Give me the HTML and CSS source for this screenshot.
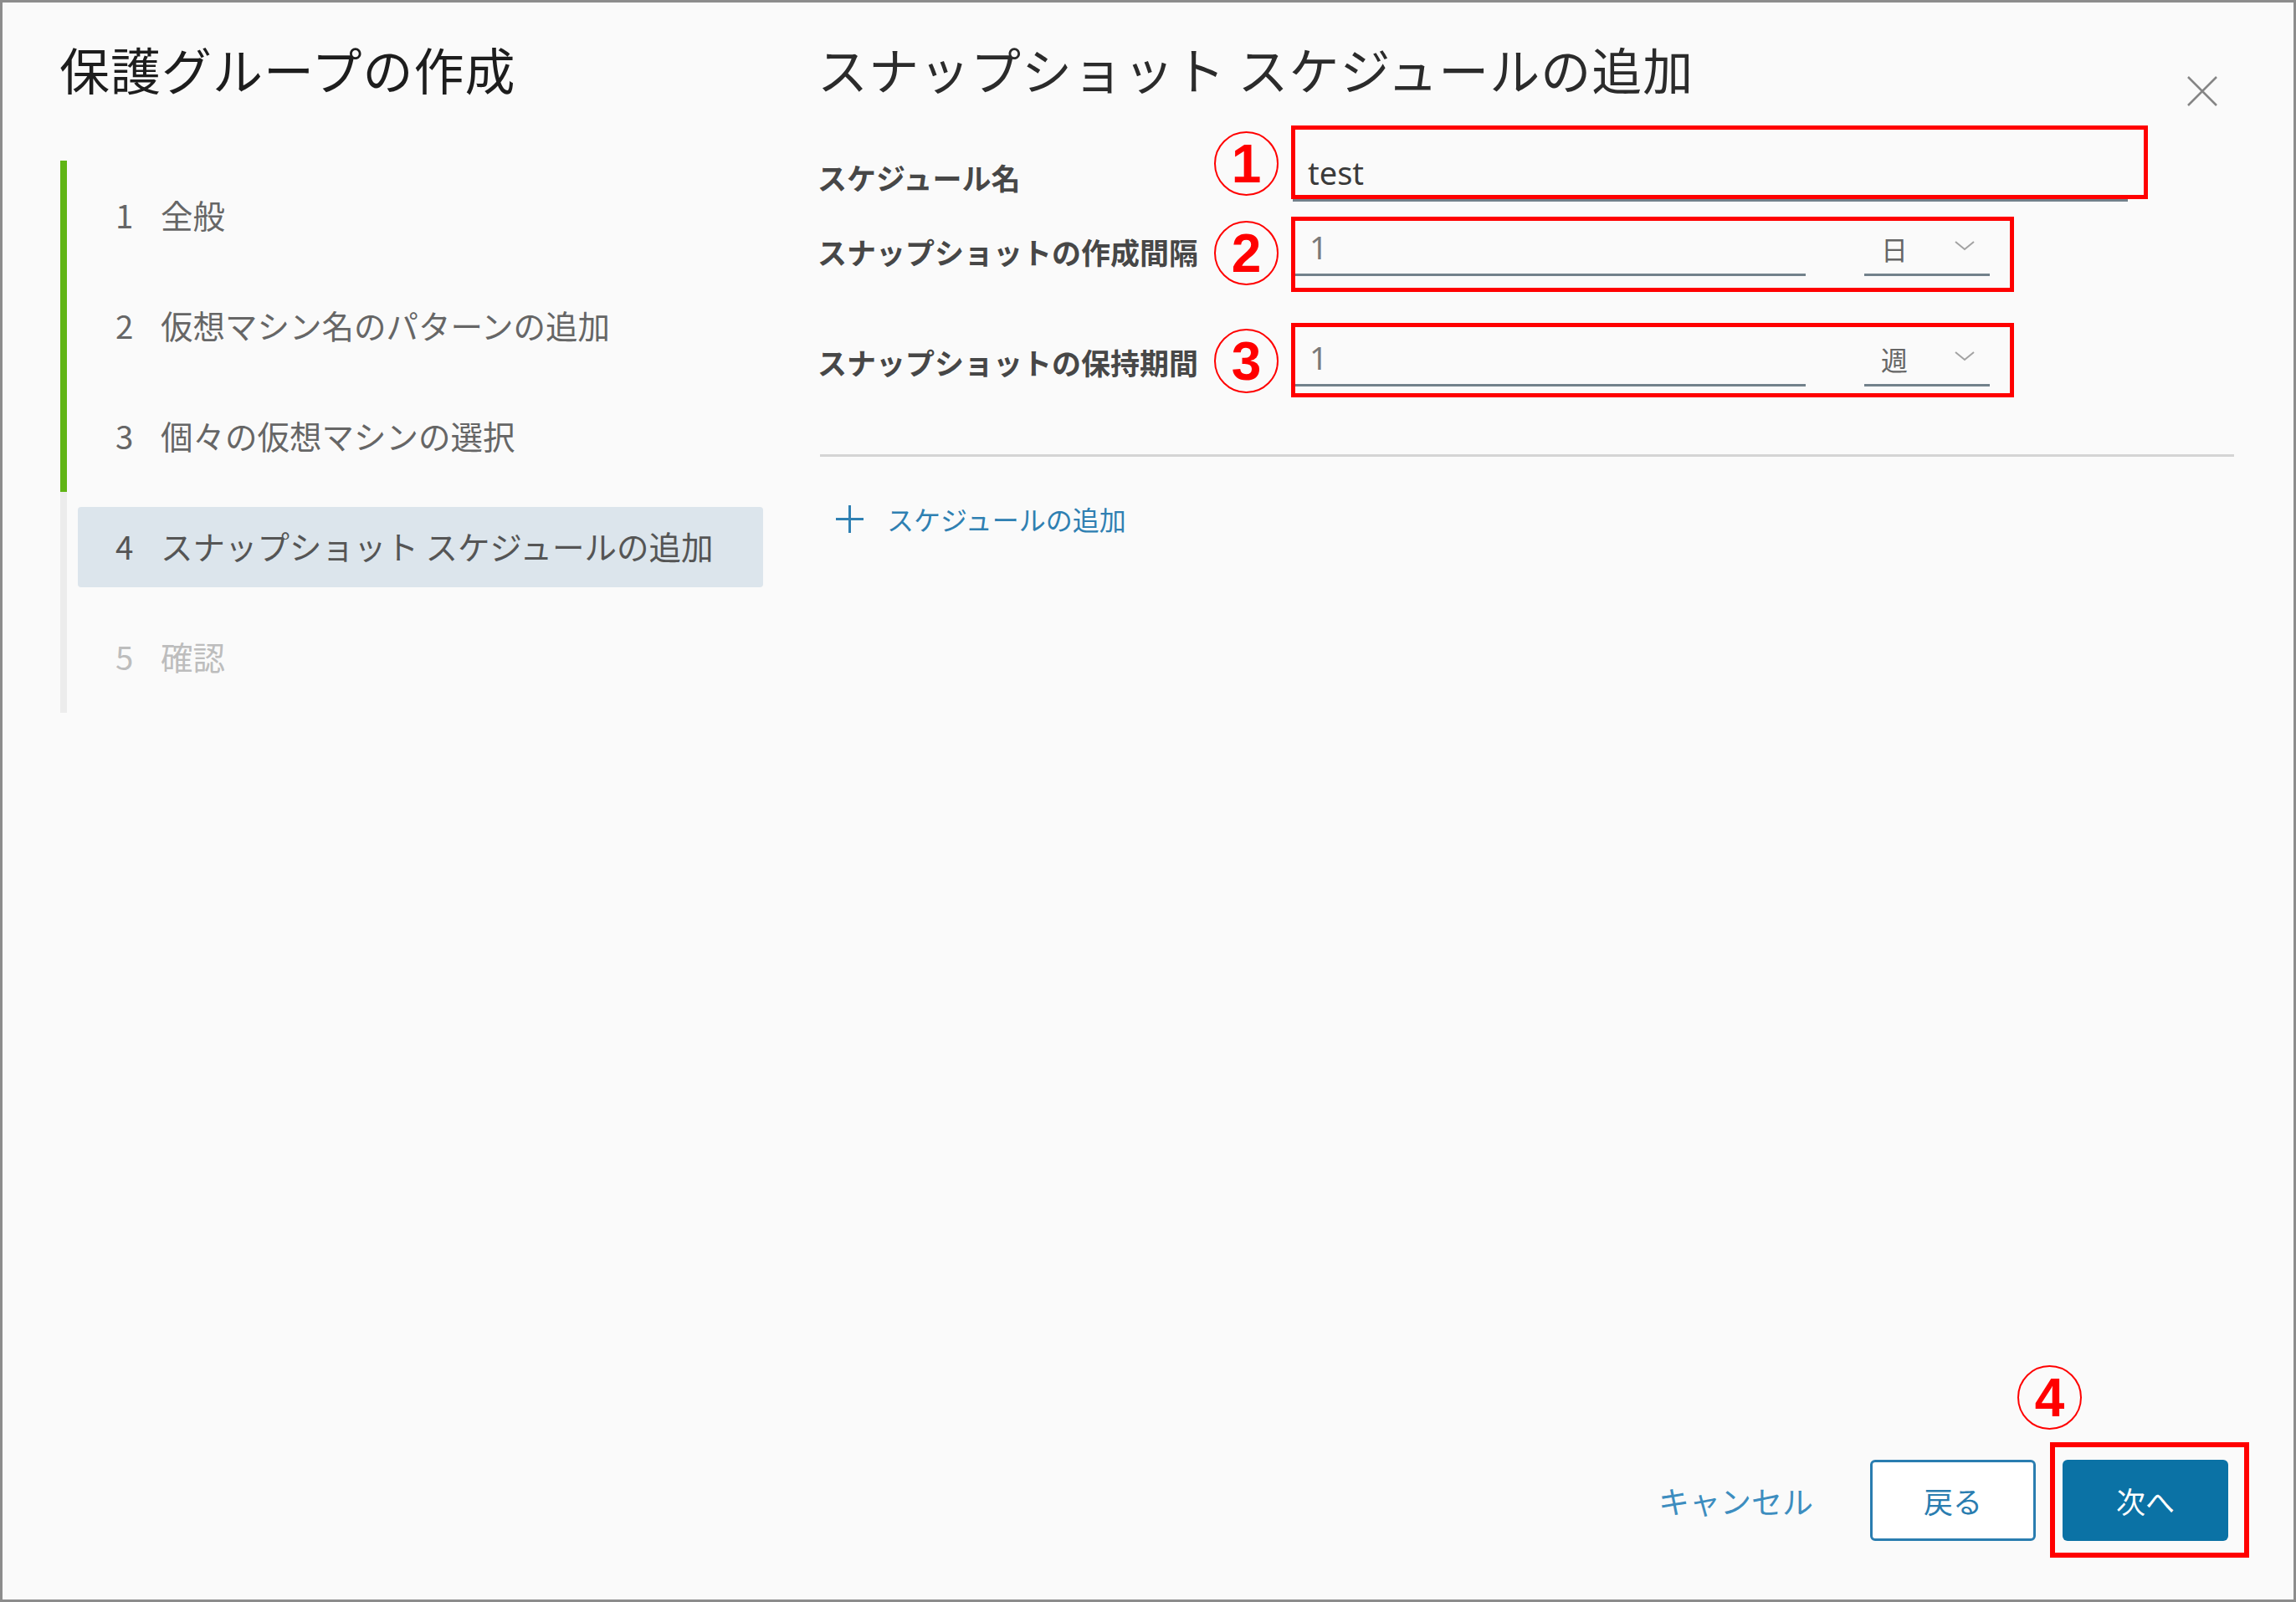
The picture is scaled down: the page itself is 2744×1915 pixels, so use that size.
FILE: index.html
```html
<!DOCTYPE html>
<html lang="ja">
<head>
<meta charset="utf-8">
<title>保護グループの作成</title>
<link rel="stylesheet" href="styles.css">
</head>
<body>
<div class="frame">
  <aside class="sidebar">
    <h1 class="wiz-title">保護グループの作成</h1>
    <ol class="steps">
      <li class="step done"><div class="step-inner"><span class="num">1</span><span>全般</span></div></li>
      <li class="step done"><div class="step-inner"><span class="num">2</span><span>仮想マシン名のパターンの追加</span></div></li>
      <li class="step done"><div class="step-inner"><span class="num">3</span><span>個々の仮想マシンの選択</span></div></li>
      <li class="step current"><div class="step-inner"><span class="num">4</span><span>スナップショット スケジュールの追加</span></div></li>
      <li class="step todo"><div class="step-inner"><span class="num">5</span><span>確認</span></div></li>
    </ol>
  </aside>

  <main class="content">
    <header class="content-head">
      <h2 class="content-title">スナップショット スケジュールの追加</h2>
      <button class="close" aria-label="閉じる">
        <svg width="38" height="38" viewBox="0 0 38 38"><path d="M2 2 L36 36 M36 2 L2 36" stroke="#858585" stroke-width="2.5" fill="none"/></svg>
      </button>
    </header>

    <div class="form">
      <div class="row r1">
        <div class="label">スケジュール名</div>
        <div class="marker">1</div>
        <div class="field">
          <div class="text-input wide value-dark">test</div>
          <span class="annot"></span>
        </div>
      </div>
      <div class="row r2">
        <div class="label">スナップショットの作成間隔</div>
        <div class="marker">2</div>
        <div class="field split">
          <div class="text-input short">1</div>
          <div class="select"><span>日</span><svg class="chev" width="24" height="12" viewBox="0 0 24 12"><path d="M1 1 L12 10 L23 1" fill="none" stroke="#a2a2a2" stroke-width="2"/></svg></div>
          <span class="annot"></span>
        </div>
      </div>
      <div class="row r3">
        <div class="label">スナップショットの保持期間</div>
        <div class="marker">3</div>
        <div class="field split">
          <div class="text-input short">1</div>
          <div class="select"><span>週</span><svg class="chev" width="24" height="12" viewBox="0 0 24 12"><path d="M1 1 L12 10 L23 1" fill="none" stroke="#a2a2a2" stroke-width="2"/></svg></div>
          <span class="annot"></span>
        </div>
      </div>
    </div>

    <hr class="divider">

    <button class="add-link">
      <svg width="35" height="35" viewBox="0 0 35 35"><path d="M17.5 1 V34 M1 17.5 H34" stroke="#2f80b2" stroke-width="3" fill="none"/></svg>
      <span>スケジュールの追加</span>
    </button>

    <footer class="footer">
      <button class="btn btn-link">キャンセル</button>
      <button class="btn btn-outline">戻る</button>
      <div class="next-wrap">
        <button class="btn btn-primary">次へ</button>
        <span class="annot a4"></span>
        <div class="marker m4">4</div>
      </div>
    </footer>
  </main>
</div>
</body>
</html>
```

FILE: styles.css
```css
html, body {
  margin: 0;
  padding: 0;
  background: #fafafa;
}

.frame {
  box-sizing: border-box;
  width: 2744px;
  height: 1915px;
  border: 3px solid #8c8c8c;
  background: #fafafa;
  display: grid;
  grid-template-columns: 909px 1fr;
  font-family: "Noto Sans CJK JP", "Noto Sans", sans-serif;
  overflow: hidden;
}

/* ---------- sidebar ---------- */
.sidebar {
  padding: 43px 0 0 68px;
}

.wiz-title {
  margin: 0;
  font-size: 60px;
  line-height: 72px;
  font-weight: 400;
  letter-spacing: 1px;
  color: #1d1d1d;
  white-space: nowrap;
}

.steps {
  list-style: none;
  margin: 74px 0 0 1px;
  padding: 0;
}

.step {
  height: 132px;
  border-left: 8px solid #ececec;
  display: flex;
  align-items: center;
}

.step.done {
  border-left-color: #60b515;
}

.step-inner {
  box-sizing: border-box;
  flex: 1;
  margin-left: 13px;
  height: 96px;
  display: flex;
  align-items: center;
  padding: 0 0 5px 45px;
  border-radius: 4px;
  font-size: 38.5px;
  color: #666666;
  white-space: nowrap;
}

.num {
  width: 54px;
  flex: none;
}

.step.current .step-inner {
  background: #dce5ec;
  color: #555555;
}

.step.todo .step-inner {
  color: #bdbdbd;
}

/* ---------- main content ---------- */
.content {
  display: flex;
  flex-direction: column;
  padding: 43px 71px 70px 65px;
  min-width: 0;
}

.content-head {
  height: 72px;
  display: flex;
  justify-content: space-between;
  align-items: flex-start;
}

.content-title {
  margin: 0;
  font-size: 60px;
  line-height: 72px;
  font-weight: 400;
  letter-spacing: 1px;
  color: #2b2b2b;
  white-space: nowrap;
}

.close {
  margin: 44px 19px 0 0;
  width: 38px;
  height: 38px;
  padding: 0;
  border: 0;
  background: none;
  display: block;
  flex: none;
}

.close svg {
  display: block;
}

/* ---------- form ---------- */
.form {
  margin-top: 39px;
}

.row {
  display: grid;
  grid-template-columns: 474px 77px 1fr;
  height: 84px;
  align-items: end;
}

.r2 { margin-top: 5px; }
.r3 { margin-top: 48px; }

.label {
  font-size: 35px;
  font-weight: 700;
  line-height: 44px;
  color: #474747;
  margin-bottom: 7px;
  white-space: nowrap;
}

.marker {
  box-sizing: border-box;
  width: 77px;
  height: 77px;
  border: 2.5px solid #ff0000;
  border-radius: 50%;
  color: #ff0000;
  font-family: "Liberation Sans", Arial, sans-serif;
  font-weight: 700;
  font-size: 64px;
  line-height: 1;
  display: flex;
  align-items: center;
  justify-content: center;
}

.r1 .marker { margin-bottom: 7px; }
.r2 .marker { margin-bottom: -11px; }
.r3 .marker { margin-bottom: -8px; }

.field {
  position: relative;
  margin-left: 15px;
}

.field.split {
  display: flex;
}

.text-input {
  box-sizing: border-box;
  height: 57px;
  border-bottom: 3px solid #72818b;
  font-family: "Noto Sans", "Liberation Sans", sans-serif;
  font-size: 38px;
  line-height: 44px;
  padding: 0 0 12px 18px;
  color: #7a7a7a;
}

.text-input.value-dark {
  color: #3b3b3b;
}

.text-input.wide {
  margin-left: 2px;
  width: 998px;
}

.text-input.short {
  margin-left: 4px;
  width: 611px;
}

.select {
  box-sizing: border-box;
  height: 57px;
  width: 150px;
  margin-left: 70px;
  border-bottom: 3px solid #72818b;
  display: flex;
  align-items: center;
  justify-content: space-between;
  padding: 0 18px 6px 20px;
  font-size: 32px;
  color: #666666;
}

.chev {
  margin-bottom: 6px;
}

.annot {
  position: absolute;
  box-sizing: border-box;
  border: 5px solid #ff0000;
  pointer-events: none;
}

.r1 .annot {
  left: 0;
  width: 1024px;
  height: 88px;
  bottom: 3px;
}

.r2 .annot,
.r3 .annot {
  left: 0;
  width: 864px;
}

.r2 .annot {
  height: 90px;
  bottom: -19px;
}

.r3 .annot {
  height: 89px;
  bottom: -13px;
}

/* ---------- divider & add link ---------- */
.divider {
  margin: 81px 0 0 3px;
  border: 0;
  border-top: 3px solid #d4d4d4;
  height: 0;
}

.add-link {
  align-self: flex-start;
  margin: 54px 0 0 21px;
  padding: 0;
  border: 0;
  background: none;
  display: flex;
  align-items: center;
  gap: 27px;
  font-family: inherit;
  font-size: 32px;
  line-height: 40px;
  color: #2f80b2;
}

.add-link svg {
  display: block;
}

/* ---------- footer ---------- */
.footer {
  margin-top: auto;
  margin-right: 7px;
  display: flex;
  justify-content: flex-end;
  align-items: center;
}

.btn {
  box-sizing: border-box;
  height: 97px;
  width: 198px;
  border-radius: 6px;
  font-family: inherit;
  font-size: 35px;
  padding: 0;
}

.btn-link {
  width: auto;
  border: 0;
  background: none;
  color: #3d8dbf;
  font-size: 37px;
  margin-right: 68px;
}

.btn-outline {
  border: 3px solid #2a7db0;
  background: #ffffff;
  color: #2a7db0;
  margin-right: 32px;
}

.btn-primary {
  border: 0;
  background: #0b72a5;
  color: #ffffff;
  display: block;
}

.next-wrap {
  position: relative;
}

.annot.a4 {
  left: -15px;
  right: -25px;
  top: -21px;
  bottom: -20px;
  border-width: 6px;
}

.marker.m4 {
  position: absolute;
  left: -54px;
  top: -113px;
}
```
